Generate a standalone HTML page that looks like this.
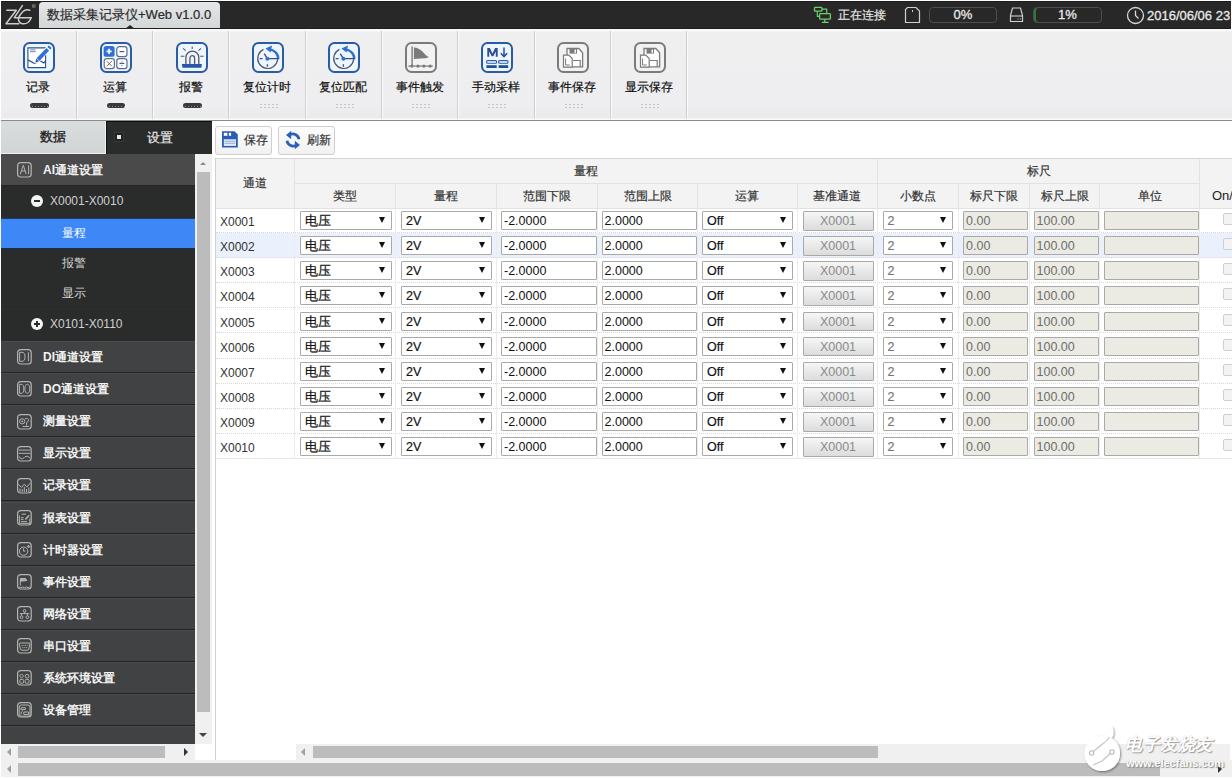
<!DOCTYPE html>
<html><head><meta charset="utf-8"><style>
*{box-sizing:border-box;margin:0;padding:0}
html,body{width:1232px;height:779px;overflow:hidden;background:#fff;font-family:"Liberation Sans",sans-serif;font-size:12px;color:#333}
.tbtn .lbl,.th,.btn span,#stab1,#stab2 span,.sel,#tab{-webkit-text-stroke:0.2px currentColor}
#stab1{-webkit-text-stroke:0.35px currentColor}
.a{position:absolute}
#hdr{left:1px;top:1px;width:1230px;height:28px;background:#282828;border-top:1px solid #1c1c1c;border-bottom:1px solid #1e1e1e}
#tab{left:39px;top:2px;width:181px;height:26px;background:linear-gradient(#e4e6e7,#d4d7d8);border-radius:4px 4px 0 0;color:#2a2a2a;font-size:13px;line-height:26px;padding-left:8px;white-space:nowrap}
#tb{left:1px;top:29px;width:1231px;height:92px;background:linear-gradient(#f9f9f9,#f9f9f9 2px,#efeff0 3px,#eeeef0 85%,#e9eaea);border-bottom:1.5px solid #8a8c8c;box-shadow:inset 0 -1.5px 0 #fbfbfb}
.tbtn{top:2px;width:76.3px;height:88px;border-right:1px solid #cfcfcf;box-shadow:1px 0 0 #fafafa}
.tbtn .lbl{position:absolute;left:0;width:100%;top:48.3px;text-align:center;font-size:12px;color:#111;line-height:16px;white-space:nowrap}
.tbtn svg{position:absolute;left:22.7px;top:11px}
.pill{position:absolute;top:72px;left:29.8px;width:18.8px;height:5.2px;border-radius:3px;background:radial-gradient(circle,#8a8a8a 0.6px,transparent 0.9px) 1px 0.5px/3px 4.5px,#3a3a3a}
.dots{position:absolute;top:72px;left:29px;width:20px;height:6px;background:radial-gradient(circle,#c4c4c4 0.65px,transparent 1px) 0 0/4px 3px}
#stab1{left:1px;top:121px;width:104px;height:33px;background:linear-gradient(#dadddd,#d1d5d6);text-align:center;line-height:31px;font-size:13px;color:#222;border-bottom:1px solid #eef0f0}
#stab2{left:106px;top:120.5px;width:106px;height:33.5px;background:#2a2b2b;color:#e8e8e8;font-size:13px;line-height:31px;border-top:1px solid #0c0c0c;border-left:1px solid #111}
#menu{left:1px;top:154px;width:194px;height:590px;background:#3d3d3d;overflow:hidden}
.mi{position:absolute;left:0;width:194px;height:32.1px;background:#414243;border-bottom:1px solid #242424;box-shadow:inset 0 1px 0 #4b4c4c;color:#f2f2f2;font-size:12px;font-weight:bold;line-height:31px}
.mi .t{position:absolute;left:42px;top:1px}
.mi svg{position:absolute;left:16.4px;top:8.4px}
.sg{position:absolute;left:0;width:194px;background:#2a2b2b;color:#d8d8d8;font-size:13px}
#vs{left:195px;top:154px;width:17px;height:590px;background:#f0f0f0}
#hs{left:1px;top:744px;width:194px;height:16px;background:#f0f0f0}
#content{left:212px;top:121px;width:1020px;height:639px;background:#fff}
.btn{position:absolute;top:126px;height:28.5px;border:1px solid #cfcfcf;border-radius:3px;background:linear-gradient(#fdfdfd,#f1f1f1);font-size:12px;line-height:26px}
.th{position:absolute;background:#f3f3f3;border-right:1px solid #e2e2e2;border-bottom:1px solid #e2e2e2;text-align:center;font-size:12px;color:#333}
.cell{position:absolute;border-right:1px dotted #d8d8d8;border-bottom:1px dotted #cfcfcf}
.sel,.inp,.dis,.xb{position:absolute;height:19px;border:1px solid #a9a9a9;border-radius:1px;background:#fff;font-size:12.5px;color:#111;line-height:18px;padding-left:4px;white-space:nowrap}
.inp,.dis{padding-left:2px;font-size:12.5px;line-height:18.5px}
.sel:after{content:"";position:absolute;right:6px;top:5px;border-left:3px solid transparent;border-right:3px solid transparent;border-top:6.5px solid #111}
.dis{background:#ebebe4;color:#6d6d6d}
.xb{background:linear-gradient(#f6f6f6,#dcdcdc);color:#8a8a8a;text-align:center;padding:0;line-height:19px;height:19.5px}
.chk{position:absolute;width:12px;height:12px;border:1px solid #cfcfcf;border-radius:2px;background:#f3f3f3}
</style></head><body>
<div id="hdr" class="a"></div>
<svg class="a" style="left:3px;top:3px" width="34" height="24" viewBox="0 0 34 24">
<path d="M3.3 7.2H13.3L3 20.7H16.3" fill="none" stroke="#cdcdcd" stroke-width="1.5" stroke-linejoin="round"/>
<path d="M19.7 2.2L11.3 14.7H21" fill="none" stroke="#cdcdcd" stroke-width="1.5" stroke-linejoin="round"/>
<path d="M27.3 7.5Q23 5.5 20 8.5Q16.5 12 15.5 15Q15 19 18.5 20.5Q22 21.5 25 19.5Q27 17.5 28.3 14.7H20.7" fill="none" stroke="#cdcdcd" stroke-width="1.5" stroke-linejoin="round"/>
<rect x="29" y="1.3" width="3.5" height="3.4" fill="#6a6a6a"/>
</svg>
<div id="tab" class="a">数据采集记录仪+Web v1.0.0</div>
<div class="a" style="left:124.5px;top:24.5px;border-left:5px solid transparent;border-right:5px solid transparent;border-bottom:4px solid #262626"></div>

<svg class="a" style="left:813px;top:6px" width="19" height="18" viewBox="0 0 19 18">
<rect x="1.5" y="1.4" width="7.4" height="3.8" rx="0.8" fill="none" stroke="#6ccd6c" stroke-width="1.3"/>
<path d="M4.3 5.2V10.4H6.3M8.9 3.1H13.7V7.3" fill="none" stroke="#6ccd6c" stroke-width="1.2"/>
<rect x="6.6" y="7.6" width="10.8" height="5.6" rx="0.8" fill="none" stroke="#6ccd6c" stroke-width="1.3"/>
<path d="M11.8 13.2V16.2M8.9 16.4H15.6" stroke="#6ccd6c" stroke-width="1.3"/>
</svg>
<div class="a" style="left:838px;top:7px;font-size:12px;line-height:16px;color:#e6e6e6;white-space:nowrap;-webkit-text-stroke:0.2px #e6e6e6">正在连接</div>
<svg class="a" style="left:904px;top:6px" width="17" height="18" viewBox="0 0 17 18">
<path d="M3.5 1.5H12L15.5 5V16.5H1.5V3.5Z" fill="none" stroke="#cfcfcf" stroke-width="1.2"/>
<path d="M8.5 4V6" stroke="#cfcfcf" stroke-width="1"/>
</svg>
<div class="a" style="left:929px;top:7px;width:68px;height:16px;border:1px solid #4d4d4d;border-radius:4px;text-align:center;color:#e8e8e8;font-size:13px;line-height:14px;-webkit-text-stroke:0.3px #e8e8e8">0%</div>
<svg class="a" style="left:1008px;top:6px" width="17" height="18" viewBox="0 0 17 18">
<path d="M2.5 9.5L4.5 2H12.5L14.5 9.5V15.5H2.5Z" fill="none" stroke="#cfcfcf" stroke-width="1.2"/>
<path d="M2.5 10H14.5" stroke="#cfcfcf" stroke-width="1.1"/>
<path d="M9.5 13H10.5M11.8 13H12.8" stroke="#cfcfcf" stroke-width="1.2"/>
</svg>
<div class="a" style="left:1033px;top:7px;width:69px;height:16px;border:1px solid #4d4d4d;border-radius:4px;text-align:center;color:#e8e8e8;font-size:13px;line-height:14px;box-shadow:inset 2px 0 0 #2e7d2e;-webkit-text-stroke:0.3px #e8e8e8">1%</div>
<svg class="a" style="left:1126px;top:6px" width="19" height="19" viewBox="0 0 19 19">
<circle cx="9.5" cy="9.5" r="8" fill="none" stroke="#d8d8d8" stroke-width="1.3"/>
<path d="M9.5 4.5V9.5L12.5 12.5" fill="none" stroke="#d8d8d8" stroke-width="1.3"/>
</svg>
<div class="a" style="left:1147px;top:7px;font-size:13px;line-height:17px;color:#e8e8e8;white-space:nowrap;-webkit-text-stroke:0.3px #e8e8e8">2016/06/06 23:</div>

<div id="tb" class="a"><div class="a tbtn" style="left:-0.40px"><svg width="32" height="31" viewBox="0 0 32 31"><rect x="1" y="1" width="30" height="29" rx="5.5" fill="#eef6fd" stroke="#2b5aa6" stroke-width="2"/><path d="M4.9 5.9H22.6V25.6H4.9Z" fill="#fff" stroke="#2c4f8f" stroke-width="1.1"/>
<path d="M7 7.9H12.5M7 9.7H12.5" stroke="#5a78b0" stroke-width="0.9"/>
<path d="M4.9 17.9L11.6 21.5L16.7 18.5L20.8 21L22.6 18.9" fill="none" stroke="#2c4f8f" stroke-width="1.2"/>
<path d="M12.2 16.6L23.6 4.6L27.4 8.2L16 20.2L11.4 21.5Z" fill="#fff"/>
<path d="M13.6 16.3L23.4 6L26.2 8.6L16.4 18.9Z" fill="#2f6fd6"/><path d="M24.4 4.9L25.8 3.4L28.6 6L27.2 7.5Z" fill="#2f6fd6"/><path d="M13.3 16.8L16 19.3L12.4 20.4Z" fill="#2a4f90"/></svg><div class="lbl">记录</div><div class="pill"></div></div>
<div class="a tbtn" style="left:75.90px"><svg width="32" height="31" viewBox="0 0 32 31"><rect x="1" y="1" width="30" height="29" rx="5.5" fill="#eef6fd" stroke="#2b5aa6" stroke-width="2"/><rect x="3.6" y="4" width="11" height="10.8" rx="2.6" fill="#2f6fd6"/>
<path d="M9.1 6.8V12M6.5 9.4H11.7" stroke="#fff" stroke-width="1.7"/>
<rect x="16.8" y="4.6" width="10.2" height="10" rx="2.6" fill="#fff" stroke="#5a6c94" stroke-width="1.2"/>
<path d="M19.5 9.6H24.3" stroke="#4a5a80" stroke-width="1.2"/>
<rect x="4.2" y="16.6" width="10.2" height="10" rx="2.6" fill="#fff" stroke="#6a7088" stroke-width="1.2"/>
<path d="M6.8 19.2L11.8 24.2M11.8 19.2L6.8 24.2" stroke="#6a6a7a" stroke-width="1"/>
<rect x="16.8" y="16.6" width="10.2" height="10" rx="2.6" fill="#fff" stroke="#5a6c94" stroke-width="1.2"/>
<path d="M19.5 21.4H24.3M21.9 18.8V19.6M21.9 23.2V24" stroke="#4a5a80" stroke-width="1.1"/></svg><div class="lbl">运算</div><div class="pill"></div></div>
<div class="a tbtn" style="left:152.20px"><svg width="32" height="31" viewBox="0 0 32 31"><rect x="1" y="1" width="30" height="29" rx="5.5" fill="#eef6fd" stroke="#2b5aa6" stroke-width="2"/><path d="M9.9 22V15.6A6.45 6.45 0 0 1 22.8 15.6V22" fill="none" stroke="#4f586e" stroke-width="1.3"/>
<path d="M13.9 22V16A2.35 2.35 0 0 1 18.6 16V22" fill="none" stroke="#4f586e" stroke-width="1.3"/>
<path d="M16.2 4.5V7M7.1 6.3L9.6 8.6M25 6.3L22.5 8.6M4.6 14.2H8.4M24.1 14.2H27.7" stroke="#5a5a5a" stroke-width="1.1"/>
<path d="M5.9 21.9H25.9L25.4 25.8H6.4Z" fill="#2757a8"/></svg><div class="lbl">报警</div><div class="pill"></div></div>
<div class="a tbtn" style="left:228.50px"><svg width="32" height="31" viewBox="0 0 32 31"><rect x="1" y="1" width="30" height="29" rx="5.5" fill="#eef6fd" stroke="#2b5aa6" stroke-width="2"/><path d="M23.5 10.2A10 10 0 1 1 11.5 7.4" fill="none" stroke="#4d5670" stroke-width="1.2"/>
<path d="M15.5 6.6A10.6 10.6 0 0 1 27.6 16.7H25A8.3 8.3 0 0 0 17.8 8.6Z" fill="#2f6fd6"/>
<path d="M13.4 6.4L20 3.6L18.6 10.4Z" fill="#2f6fd6"/>
<path d="M7.6 16.7H10.6M15.4 22.2V24.8M15.4 16.7H26.8M12.2 11.6L15.4 16.7" stroke="#3c4c84" stroke-width="1.3"/>
<circle cx="15.4" cy="16.7" r="2" fill="#2f6fd6"/></svg><div class="lbl">复位计时</div><div class="dots"></div></div>
<div class="a tbtn" style="left:304.80px"><svg width="32" height="31" viewBox="0 0 32 31"><rect x="1" y="1" width="30" height="29" rx="5.5" fill="#eef6fd" stroke="#2b5aa6" stroke-width="2"/><path d="M23.5 10.2A10 10 0 1 1 11.5 7.4" fill="none" stroke="#4d5670" stroke-width="1.2"/>
<path d="M15.5 6.6A10.6 10.6 0 0 1 27.6 16.7H25A8.3 8.3 0 0 0 17.8 8.6Z" fill="#2f6fd6"/>
<path d="M13.4 6.4L20 3.6L18.6 10.4Z" fill="#2f6fd6"/>
<path d="M7.6 16.7H10.6M15.4 22.2V24.8M15.4 16.7H26.8M12.2 11.6L15.4 16.7" stroke="#3c4c84" stroke-width="1.3"/>
<circle cx="15.4" cy="16.7" r="2" fill="#2f6fd6"/></svg><div class="lbl">复位匹配</div><div class="dots"></div></div>
<div class="a tbtn" style="left:381.10px"><svg width="32" height="31" viewBox="0 0 32 31"><rect x="1" y="1" width="30" height="29" rx="5.5" fill="#f2f2f2" stroke="#7b7b7b" stroke-width="2"/><path d="M7.1 4.4V23.5" stroke="#7b7b7b" stroke-width="1.4"/>
<path d="M8.9 5.4Q14 5.6 17.5 9.5Q20.5 13.5 23.8 15.2Q21 16.6 16 16.6Q12 16.6 8.9 16.9Z" fill="#7b7b7b"/>
<path d="M3.3 24.1H27.9" stroke="#7b7b7b" stroke-width="1.2"/>
<circle cx="6.9" cy="24.1" r="1.6" fill="#7b7b7b"/><circle cx="13" cy="24.1" r="1.6" fill="#7b7b7b"/><circle cx="18.9" cy="24.1" r="1.6" fill="#7b7b7b"/><circle cx="25.1" cy="24.1" r="1.6" fill="#7b7b7b"/></svg><div class="lbl">事件触发</div><div class="dots"></div></div>
<div class="a tbtn" style="left:457.40px"><svg width="32" height="31" viewBox="0 0 32 31"><rect x="1" y="1" width="30" height="29" rx="5.5" fill="#eef6fd" stroke="#2b5aa6" stroke-width="2"/><path d="M6.3 14.8V5.9H8.9L11.5 11.4L14.1 5.9H16.7V14.8H14.8V9.4L12.3 14.2H10.7L8.2 9.4V14.8Z" fill="#2a4f9a"/>
<path d="M23 5.5V14M19.8 11.2L23 14.6L26.2 11.2" fill="none" stroke="#2a4f9a" stroke-width="1.5"/>
<rect x="5.6" y="18.6" width="10" height="2.6" rx="1" fill="#fff" stroke="#2a5aa8" stroke-width="1.1"/>
<rect x="17.6" y="18.6" width="9.4" height="2.6" rx="1" fill="#fff" stroke="#2a5aa8" stroke-width="1.1"/>
<rect x="5.4" y="23.2" width="10.3" height="2.8" fill="#234f95"/><rect x="17.6" y="23.2" width="9.6" height="2.8" fill="#234f95"/></svg><div class="lbl">手动采样</div><div class="dots"></div></div>
<div class="a tbtn" style="left:533.70px"><svg width="32" height="31" viewBox="0 0 32 31"><rect x="1" y="1" width="30" height="29" rx="5.5" fill="#f2f2f2" stroke="#7b7b7b" stroke-width="2"/><path d="M10 6.5H21.8L25.6 10.8V24.8H10Z" fill="#fff" stroke="#7b7b7b" stroke-width="1.3"/>
<rect x="12.5" y="7" width="7.5" height="4.6" fill="#7b7b7b"/><rect x="17.5" y="7.6" width="1.5" height="3.2" fill="#fff"/>
<path d="M16 18.5H23.2V24.8" fill="none" stroke="#7b7b7b" stroke-width="1.2"/>
<path d="M6.5 13.2H11.8L15.2 16.6V25.2H6.5Z" fill="#fff" stroke="#7b7b7b" stroke-width="1.2"/>
<path d="M8.6 16.5V23H12.8" fill="none" stroke="#7b7b7b" stroke-width="1"/></svg><div class="lbl">事件保存</div><div class="dots"></div></div>
<div class="a tbtn" style="left:610.00px"><svg width="32" height="31" viewBox="0 0 32 31"><rect x="1" y="1" width="30" height="29" rx="5.5" fill="#f2f2f2" stroke="#7b7b7b" stroke-width="2"/><path d="M10 6.5H21.8L25.6 10.8V24.8H10Z" fill="#fff" stroke="#7b7b7b" stroke-width="1.3"/>
<rect x="12.5" y="7" width="7.5" height="4.6" fill="#7b7b7b"/><rect x="17.5" y="7.6" width="1.5" height="3.2" fill="#fff"/>
<path d="M16 18.5H23.2V24.8" fill="none" stroke="#7b7b7b" stroke-width="1.2"/>
<path d="M6.5 13.2H11.8L15.2 16.6V25.2H6.5Z" fill="#fff" stroke="#7b7b7b" stroke-width="1.2"/>
<path d="M8.6 16.5V23H12.8" fill="none" stroke="#7b7b7b" stroke-width="1"/></svg><div class="lbl">显示保存</div><div class="dots"></div></div></div>
<div id="stab1" class="a">数据</div><div class="a" style="left:105px;top:121px;width:1px;height:33px;background:#f0f2f2"></div>
<div id="stab2" class="a"><span class="a" style="left:10px;top:13.5px;width:4px;height:4px;background:#e8e8e8;box-shadow:0 0 0 2px #222,0 0 0 3px #383838"></span><span class="a" style="left:40px;top:0">设置</span></div>
<div id="menu" class="a">
<div class="mi" style="top:0;background:#4a4a4a;box-shadow:none"><svg width="16" height="17" viewBox="0 0 16 17"><rect x="0.6" y="0.6" width="13.6" height="14.4" rx="3" fill="none" stroke="#b4b4b4" stroke-width="1.2"/><g fill="none" stroke="#b4b4b4" stroke-width="1"><path d="M3.3 12.2L6.3 3.3L9.2 12.2M4.4 9H8.3M11.6 3.3V12.2"/></g></svg><span class="t" style="top:1px">AI通道设置</span></div>
<div class="sg" style="top:32px;height:155px"></div>
<div class="a" style="left:30px;top:41px;width:12px;height:12px;border-radius:50%;background:#f4f4f4"></div><div class="a" style="left:33px;top:46px;width:6px;height:2px;background:#2a2b2b"></div>
<div class="a" style="left:49px;top:39px;color:#d0d0d0;font-size:12px;line-height:16px;white-space:nowrap">X0001-X0010</div>
<div class="a" style="left:0;top:64px;width:194px;height:31px;background:#3d87f6;border-top:1px solid #1e3a66;border-bottom:1px solid #1a2c4c"></div>
<div class="a" style="left:61px;top:71px;color:#fff;font-size:12px;line-height:16px">量程</div>
<div class="a" style="left:61px;top:101px;color:#d0d0d0;font-size:12px;line-height:16px">报警</div>
<div class="a" style="left:61px;top:131px;color:#d0d0d0;font-size:12px;line-height:16px">显示</div>
<div class="a" style="left:0;top:155px;width:194px;height:1px;background:#2e2e2e"></div>
<div class="a" style="left:30px;top:164px;width:12px;height:12px;border-radius:50%;background:#f4f4f4"></div><div class="a" style="left:33px;top:169px;width:6px;height:2px;background:#2a2b2b"></div><div class="a" style="left:35px;top:167px;width:2px;height:6px;background:#2a2b2b"></div>
<div class="a" style="left:49px;top:162px;color:#d0d0d0;font-size:12px;line-height:16px;white-space:nowrap">X0101-X0110</div>
<div class="mi" style="top:187.0px"><svg width="16" height="17" viewBox="0 0 16 17"><rect x="0.6" y="0.6" width="13.6" height="14.4" rx="3" fill="none" stroke="#b4b4b4" stroke-width="1.2"/><g fill="none" stroke="#b4b4b4" stroke-width="1"><path d="M2.6 3.3H5Q8 3.3 8 7.8Q8 12.3 5 12.3H2.6ZM11.4 3.3V12.3"/></g></svg><span class="t">DI通道设置</span></div>
<div class="mi" style="top:219.1px"><svg width="16" height="17" viewBox="0 0 16 17"><rect x="0.6" y="0.6" width="13.6" height="14.4" rx="3" fill="none" stroke="#b4b4b4" stroke-width="1.2"/><g fill="none" stroke="#b4b4b4" stroke-width="1"><path d="M2.4 3.3H4.2Q6.8 3.3 6.8 7.8Q6.8 12.3 4.2 12.3H2.4Z"/><ellipse cx="10.3" cy="7.8" rx="2.4" ry="4.5"/></g></svg><span class="t">DO通道设置</span></div>
<div class="mi" style="top:251.2px"><svg width="16" height="17" viewBox="0 0 16 17"><rect x="0.6" y="0.6" width="13.6" height="14.4" rx="3" fill="none" stroke="#b4b4b4" stroke-width="1.2"/><g fill="none" stroke="#b4b4b4" stroke-width="1"><circle cx="5.2" cy="7.3" r="2.6"/><circle cx="5.2" cy="7.3" r="0.6" fill="#b4b4b4"/><path d="M7.9 4.8Q11.8 4 11.6 6.3Q11.3 8 9.6 8.6V11.5M5.5 12.5H12"/></g></svg><span class="t">测量设置</span></div>
<div class="mi" style="top:283.3px"><svg width="16" height="17" viewBox="0 0 16 17"><rect x="0.6" y="0.6" width="13.6" height="14.4" rx="3" fill="none" stroke="#b4b4b4" stroke-width="1.2"/><g fill="none" stroke="#b4b4b4" stroke-width="1"><path d="M1.8 4.1H13.2M1.8 7.3H13.2M2.1 10.4Q3.5 13.6 5.5 12.8Q7 12 8 10.7Q10 9.3 12.8 11.6"/></g></svg><span class="t">显示设置</span></div>
<div class="mi" style="top:315.4px"><svg width="16" height="17" viewBox="0 0 16 17"><rect x="0.6" y="0.6" width="13.6" height="14.4" rx="3" fill="none" stroke="#b4b4b4" stroke-width="1.2"/><g fill="none" stroke="#b4b4b4" stroke-width="1"><path d="M1.4 6.4L4.5 9.4L7.3 6.1L9.8 9.1L13.2 5.1M3 10.5V14M5.2 11V14M7.3 9V14M9.5 11V14M11.8 9.5V14"/></g></svg><span class="t">记录设置</span></div>
<div class="mi" style="top:347.5px"><svg width="16" height="17" viewBox="0 0 16 17"><rect x="0.6" y="0.6" width="13.6" height="14.4" rx="3" fill="none" stroke="#b4b4b4" stroke-width="1.2"/><g fill="none" stroke="#b4b4b4" stroke-width="1"><path d="M2.4 5.6V13.4H12.8V8.5M4.5 4.2H9M4 7.6H6.5M4 9.4H6.5M4 11.6H10"/><path d="M8.4 9.5L12.2 5.2" stroke-width="1.6"/></g></svg><span class="t">报表设置</span></div>
<div class="mi" style="top:379.6px"><svg width="16" height="17" viewBox="0 0 16 17"><rect x="0.6" y="0.6" width="13.6" height="14.4" rx="3" fill="none" stroke="#b4b4b4" stroke-width="1.2"/><g fill="none" stroke="#b4b4b4" stroke-width="1"><circle cx="6.6" cy="9.2" r="4.2"/><path d="M6.6 6.3V9.2H8.4"/><path d="M10.3 4.4L11.5 3.3L12.8 4.6L11.6 5.8Z" fill="#b4b4b4"/></g></svg><span class="t">计时器设置</span></div>
<div class="mi" style="top:411.7px"><svg width="16" height="17" viewBox="0 0 16 17"><rect x="0.6" y="0.6" width="13.6" height="14.4" rx="3" fill="none" stroke="#b4b4b4" stroke-width="1.2"/><g fill="none" stroke="#b4b4b4" stroke-width="1"><path d="M3.3 4.4V11.5"/><path d="M3.6 4.6H8.6L9.8 6.6L3.6 7.2Z" fill="#b4b4b4"/><path d="M2 12.8L3.8 13.8L5.6 12.8L7.4 13.8L9.2 12.8L11 13.8L12.8 12.8"/></g></svg><span class="t">事件设置</span></div>
<div class="mi" style="top:443.8px"><svg width="16" height="17" viewBox="0 0 16 17"><rect x="0.6" y="0.6" width="13.6" height="14.4" rx="3" fill="none" stroke="#b4b4b4" stroke-width="1.2"/><g fill="none" stroke="#b4b4b4" stroke-width="1"><circle cx="7.6" cy="4.8" r="1.3"/><path d="M7.6 6.1V7.6M2.8 7.6H12.4M4.5 7.6V9.8M10.4 7.6V9.8"/><circle cx="4.5" cy="11.2" r="1.4"/><circle cx="10.4" cy="11.2" r="1.4"/></g></svg><span class="t">网络设置</span></div>
<div class="mi" style="top:475.9px"><svg width="16" height="17" viewBox="0 0 16 17"><rect x="0.6" y="0.6" width="13.6" height="14.4" rx="3" fill="none" stroke="#b4b4b4" stroke-width="1.2"/><g fill="none" stroke="#b4b4b4" stroke-width="1"><path d="M3.2 5H12Q13.2 5 12.8 6.2L11.8 11Q11.5 12.2 10.3 12.2H4.9Q3.7 12.2 3.4 11L2.4 6.2Q2.1 5 3.2 5Z"/><path d="M4.6 7.4H10.8M5.4 9.6H10" stroke-dasharray="1 0.8"/></g></svg><span class="t">串口设置</span></div>
<div class="mi" style="top:508.0px"><svg width="16" height="17" viewBox="0 0 16 17"><rect x="0.6" y="0.6" width="13.6" height="14.4" rx="3" fill="none" stroke="#b4b4b4" stroke-width="1.2"/><g fill="none" stroke="#b4b4b4" stroke-width="1"><path d="M4.5 3.9L6.6 6L4.5 8.1L2.4 6Z"/><circle cx="10.1" cy="6.2" r="1.9"/><rect x="2.8" y="9.4" width="3.8" height="3.8" rx="1"/><rect x="8.2" y="9.4" width="3.8" height="3.8" rx="1"/></g></svg><span class="t">系统环境设置</span></div>
<div class="mi" style="top:540.1px"><svg width="16" height="17" viewBox="0 0 16 17"><rect x="0.6" y="0.6" width="13.6" height="14.4" rx="3" fill="none" stroke="#b4b4b4" stroke-width="1.2"/><g fill="none" stroke="#b4b4b4" stroke-width="1"><rect x="2.2" y="3" width="10.8" height="11.2" rx="2"/><path d="M4 5.7H8.4V7.6H4ZM6 8.5Q3.8 9.5 4 12.5M6.8 10H11.6V12.5H6.8Z"/></g></svg><span class="t">设备管理</span></div>
<div class="mi" style="top:572.2px"></div>
</div>
<div id="content" class="a"></div>
<div class="btn" style="left:215px;width:57px"><svg class="a" style="left:6px;top:4px" width="16" height="17" viewBox="0 0 16 17"><path d="M0 0.2H12.5L15.8 3.4V16.5H0Z" fill="#2a5cb6"/><rect x="1.8" y="1.8" width="3.6" height="3" fill="#fff"/><rect x="6.9" y="1.8" width="2.2" height="3" fill="#fff"/><rect x="1.8" y="8.3" width="12.2" height="6.6" fill="#e4ecf8"/><path d="M2.5 10.3H13.3M2.5 12.3H13.3" stroke="#7f9fd2" stroke-width="0.8"/></svg><span class="a" style="left:28px;top:0">保存</span></div>
<div class="btn" style="left:278px;width:57px"><svg class="a" style="left:6px;top:4px" width="16" height="18" viewBox="0 0 16 18"><path d="M14 8.2A6.2 6.2 0 0 0 5.2 3.6" fill="none" stroke="#2a5fb8" stroke-width="2.8"/><path d="M1 4L6.2 -0.2V8.2Z" fill="#2a5fb8"/><path d="M2 9.8A6.2 6.2 0 0 0 10.8 14.4" fill="none" stroke="#2a5fb8" stroke-width="2.8"/><path d="M15 14L9.8 18.2V9.8Z" fill="#2a5fb8"/></svg><span class="a" style="left:28px;top:0">刷新</span></div>
<div class="a" style="left:215px;top:158px;width:1017px;height:1px;background:#d6d6d6"></div>
<div class="th" style="left:216px;top:159px;width:79px;height:50px;line-height:48px">通道</div>
<div class="th" style="left:295px;top:159px;width:583px;height:25px;line-height:24px">量程</div>
<div class="th" style="left:878px;top:159px;width:322px;height:25px;line-height:24px">标尺</div>
<div class="th" style="left:1200px;top:159px;width:40px;height:50px;border-bottom:1px solid #e2e2e2"></div>
<div class="th" style="left:295px;top:183px;width:100.5px;height:26px;line-height:24px;border-top:1px solid #e2e2e2">类型</div>
<div class="th" style="left:395.5px;top:183px;width:101.5px;height:26px;line-height:24px;border-top:1px solid #e2e2e2">量程</div>
<div class="th" style="left:497px;top:183px;width:101px;height:26px;line-height:24px;border-top:1px solid #e2e2e2">范围下限</div>
<div class="th" style="left:598px;top:183px;width:100px;height:26px;line-height:24px;border-top:1px solid #e2e2e2">范围上限</div>
<div class="th" style="left:698px;top:183px;width:99.5px;height:26px;line-height:24px;border-top:1px solid #e2e2e2">运算</div>
<div class="th" style="left:797.5px;top:183px;width:80.5px;height:26px;line-height:24px;border-top:1px solid #e2e2e2">基准通道</div>
<div class="th" style="left:878px;top:183px;width:80.5px;height:26px;line-height:24px;border-top:1px solid #e2e2e2">小数点</div>
<div class="th" style="left:958.5px;top:183px;width:71.5px;height:26px;line-height:24px;border-top:1px solid #e2e2e2">标尺下限</div>
<div class="th" style="left:1030px;top:183px;width:70px;height:26px;line-height:24px;border-top:1px solid #e2e2e2">标尺上限</div>
<div class="th" style="left:1100px;top:183px;width:100px;height:26px;line-height:24px;border-top:1px solid #e2e2e2">单位</div>
<div class="a" style="left:1212px;top:188px;font-size:13px;line-height:16px;color:#222">On/Off</div>
<div class="a" style="left:216px;top:207.8px;width:1016px;height:25.13px;background:#fff;border-bottom:1px dotted #d8d8d8"></div>
<div class="a" style="left:294px;top:207.8px;width:1px;height:25.13px;background:#ececec"></div>
<div class="a" style="left:394.5px;top:207.8px;width:1px;height:25.13px;background:#ececec"></div>
<div class="a" style="left:496px;top:207.8px;width:1px;height:25.13px;background:#ececec"></div>
<div class="a" style="left:597px;top:207.8px;width:1px;height:25.13px;background:#ececec"></div>
<div class="a" style="left:697px;top:207.8px;width:1px;height:25.13px;background:#ececec"></div>
<div class="a" style="left:796.5px;top:207.8px;width:1px;height:25.13px;background:#ececec"></div>
<div class="a" style="left:877px;top:207.8px;width:1px;height:25.13px;background:#ececec"></div>
<div class="a" style="left:957.5px;top:207.8px;width:1px;height:25.13px;background:#ececec"></div>
<div class="a" style="left:1029px;top:207.8px;width:1px;height:25.13px;background:#ececec"></div>
<div class="a" style="left:1099px;top:207.8px;width:1px;height:25.13px;background:#ececec"></div>
<div class="a" style="left:1199px;top:207.8px;width:1px;height:25.13px;background:#ececec"></div>
<div class="a" style="left:220px;top:214.00px;font-size:12px;line-height:16px;color:#333">X0001</div>
<div class="sel" style="left:300px;top:211.1px;width:92px">电压</div>
<div class="sel" style="left:401px;top:211.1px;width:90.5px">2V</div>
<div class="inp" style="left:501px;top:211.1px;width:95.5px">-2.0000</div>
<div class="inp" style="left:601.5px;top:211.1px;width:95px">2.0000</div>
<div class="sel" style="left:702px;top:211.1px;width:90.5px">Off</div>
<div class="xb" style="left:802.5px;top:211.1px;width:71px">X0001</div>
<div class="sel" style="left:882.5px;top:211.1px;width:70.5px;color:#777">2</div>
<div class="dis" style="left:963px;top:211.1px;width:65px">0.00</div>
<div class="dis" style="left:1033.5px;top:211.1px;width:65px">100.00</div>
<div class="dis" style="left:1103.5px;top:211.1px;width:95px"></div>
<div class="chk" style="left:1223px;top:213.00px"></div>
<div class="a" style="left:216px;top:232.93px;width:1016px;height:25.13px;background:#eaf1fc;border-bottom:1px dotted #d8d8d8"></div>
<div class="a" style="left:294px;top:232.93px;width:1px;height:25.13px;background:#ececec"></div>
<div class="a" style="left:394.5px;top:232.93px;width:1px;height:25.13px;background:#ececec"></div>
<div class="a" style="left:496px;top:232.93px;width:1px;height:25.13px;background:#ececec"></div>
<div class="a" style="left:597px;top:232.93px;width:1px;height:25.13px;background:#ececec"></div>
<div class="a" style="left:697px;top:232.93px;width:1px;height:25.13px;background:#ececec"></div>
<div class="a" style="left:796.5px;top:232.93px;width:1px;height:25.13px;background:#ececec"></div>
<div class="a" style="left:877px;top:232.93px;width:1px;height:25.13px;background:#ececec"></div>
<div class="a" style="left:957.5px;top:232.93px;width:1px;height:25.13px;background:#ececec"></div>
<div class="a" style="left:1029px;top:232.93px;width:1px;height:25.13px;background:#ececec"></div>
<div class="a" style="left:1099px;top:232.93px;width:1px;height:25.13px;background:#ececec"></div>
<div class="a" style="left:1199px;top:232.93px;width:1px;height:25.13px;background:#ececec"></div>
<div class="a" style="left:220px;top:239.13px;font-size:12px;line-height:16px;color:#333">X0002</div>
<div class="sel" style="left:300px;top:236.23px;width:92px">电压</div>
<div class="sel" style="left:401px;top:236.23px;width:90.5px">2V</div>
<div class="inp" style="left:501px;top:236.23px;width:95.5px">-2.0000</div>
<div class="inp" style="left:601.5px;top:236.23px;width:95px">2.0000</div>
<div class="sel" style="left:702px;top:236.23px;width:90.5px">Off</div>
<div class="xb" style="left:802.5px;top:236.23px;width:71px">X0001</div>
<div class="sel" style="left:882.5px;top:236.23px;width:70.5px;color:#777">2</div>
<div class="dis" style="left:963px;top:236.23px;width:65px">0.00</div>
<div class="dis" style="left:1033.5px;top:236.23px;width:65px">100.00</div>
<div class="dis" style="left:1103.5px;top:236.23px;width:95px"></div>
<div class="chk" style="left:1223px;top:238.13px"></div>
<div class="a" style="left:216px;top:258.06px;width:1016px;height:25.13px;background:#fff;border-bottom:1px dotted #d8d8d8"></div>
<div class="a" style="left:294px;top:258.06px;width:1px;height:25.13px;background:#ececec"></div>
<div class="a" style="left:394.5px;top:258.06px;width:1px;height:25.13px;background:#ececec"></div>
<div class="a" style="left:496px;top:258.06px;width:1px;height:25.13px;background:#ececec"></div>
<div class="a" style="left:597px;top:258.06px;width:1px;height:25.13px;background:#ececec"></div>
<div class="a" style="left:697px;top:258.06px;width:1px;height:25.13px;background:#ececec"></div>
<div class="a" style="left:796.5px;top:258.06px;width:1px;height:25.13px;background:#ececec"></div>
<div class="a" style="left:877px;top:258.06px;width:1px;height:25.13px;background:#ececec"></div>
<div class="a" style="left:957.5px;top:258.06px;width:1px;height:25.13px;background:#ececec"></div>
<div class="a" style="left:1029px;top:258.06px;width:1px;height:25.13px;background:#ececec"></div>
<div class="a" style="left:1099px;top:258.06px;width:1px;height:25.13px;background:#ececec"></div>
<div class="a" style="left:1199px;top:258.06px;width:1px;height:25.13px;background:#ececec"></div>
<div class="a" style="left:220px;top:264.26px;font-size:12px;line-height:16px;color:#333">X0003</div>
<div class="sel" style="left:300px;top:261.36px;width:92px">电压</div>
<div class="sel" style="left:401px;top:261.36px;width:90.5px">2V</div>
<div class="inp" style="left:501px;top:261.36px;width:95.5px">-2.0000</div>
<div class="inp" style="left:601.5px;top:261.36px;width:95px">2.0000</div>
<div class="sel" style="left:702px;top:261.36px;width:90.5px">Off</div>
<div class="xb" style="left:802.5px;top:261.36px;width:71px">X0001</div>
<div class="sel" style="left:882.5px;top:261.36px;width:70.5px;color:#777">2</div>
<div class="dis" style="left:963px;top:261.36px;width:65px">0.00</div>
<div class="dis" style="left:1033.5px;top:261.36px;width:65px">100.00</div>
<div class="dis" style="left:1103.5px;top:261.36px;width:95px"></div>
<div class="chk" style="left:1223px;top:263.26px"></div>
<div class="a" style="left:216px;top:283.19px;width:1016px;height:25.13px;background:#fff;border-bottom:1px dotted #d8d8d8"></div>
<div class="a" style="left:294px;top:283.19px;width:1px;height:25.13px;background:#ececec"></div>
<div class="a" style="left:394.5px;top:283.19px;width:1px;height:25.13px;background:#ececec"></div>
<div class="a" style="left:496px;top:283.19px;width:1px;height:25.13px;background:#ececec"></div>
<div class="a" style="left:597px;top:283.19px;width:1px;height:25.13px;background:#ececec"></div>
<div class="a" style="left:697px;top:283.19px;width:1px;height:25.13px;background:#ececec"></div>
<div class="a" style="left:796.5px;top:283.19px;width:1px;height:25.13px;background:#ececec"></div>
<div class="a" style="left:877px;top:283.19px;width:1px;height:25.13px;background:#ececec"></div>
<div class="a" style="left:957.5px;top:283.19px;width:1px;height:25.13px;background:#ececec"></div>
<div class="a" style="left:1029px;top:283.19px;width:1px;height:25.13px;background:#ececec"></div>
<div class="a" style="left:1099px;top:283.19px;width:1px;height:25.13px;background:#ececec"></div>
<div class="a" style="left:1199px;top:283.19px;width:1px;height:25.13px;background:#ececec"></div>
<div class="a" style="left:220px;top:289.39px;font-size:12px;line-height:16px;color:#333">X0004</div>
<div class="sel" style="left:300px;top:286.49px;width:92px">电压</div>
<div class="sel" style="left:401px;top:286.49px;width:90.5px">2V</div>
<div class="inp" style="left:501px;top:286.49px;width:95.5px">-2.0000</div>
<div class="inp" style="left:601.5px;top:286.49px;width:95px">2.0000</div>
<div class="sel" style="left:702px;top:286.49px;width:90.5px">Off</div>
<div class="xb" style="left:802.5px;top:286.49px;width:71px">X0001</div>
<div class="sel" style="left:882.5px;top:286.49px;width:70.5px;color:#777">2</div>
<div class="dis" style="left:963px;top:286.49px;width:65px">0.00</div>
<div class="dis" style="left:1033.5px;top:286.49px;width:65px">100.00</div>
<div class="dis" style="left:1103.5px;top:286.49px;width:95px"></div>
<div class="chk" style="left:1223px;top:288.39px"></div>
<div class="a" style="left:216px;top:308.32px;width:1016px;height:25.13px;background:#fff;border-bottom:1px dotted #d8d8d8"></div>
<div class="a" style="left:294px;top:308.32px;width:1px;height:25.13px;background:#ececec"></div>
<div class="a" style="left:394.5px;top:308.32px;width:1px;height:25.13px;background:#ececec"></div>
<div class="a" style="left:496px;top:308.32px;width:1px;height:25.13px;background:#ececec"></div>
<div class="a" style="left:597px;top:308.32px;width:1px;height:25.13px;background:#ececec"></div>
<div class="a" style="left:697px;top:308.32px;width:1px;height:25.13px;background:#ececec"></div>
<div class="a" style="left:796.5px;top:308.32px;width:1px;height:25.13px;background:#ececec"></div>
<div class="a" style="left:877px;top:308.32px;width:1px;height:25.13px;background:#ececec"></div>
<div class="a" style="left:957.5px;top:308.32px;width:1px;height:25.13px;background:#ececec"></div>
<div class="a" style="left:1029px;top:308.32px;width:1px;height:25.13px;background:#ececec"></div>
<div class="a" style="left:1099px;top:308.32px;width:1px;height:25.13px;background:#ececec"></div>
<div class="a" style="left:1199px;top:308.32px;width:1px;height:25.13px;background:#ececec"></div>
<div class="a" style="left:220px;top:314.52px;font-size:12px;line-height:16px;color:#333">X0005</div>
<div class="sel" style="left:300px;top:311.62px;width:92px">电压</div>
<div class="sel" style="left:401px;top:311.62px;width:90.5px">2V</div>
<div class="inp" style="left:501px;top:311.62px;width:95.5px">-2.0000</div>
<div class="inp" style="left:601.5px;top:311.62px;width:95px">2.0000</div>
<div class="sel" style="left:702px;top:311.62px;width:90.5px">Off</div>
<div class="xb" style="left:802.5px;top:311.62px;width:71px">X0001</div>
<div class="sel" style="left:882.5px;top:311.62px;width:70.5px;color:#777">2</div>
<div class="dis" style="left:963px;top:311.62px;width:65px">0.00</div>
<div class="dis" style="left:1033.5px;top:311.62px;width:65px">100.00</div>
<div class="dis" style="left:1103.5px;top:311.62px;width:95px"></div>
<div class="chk" style="left:1223px;top:313.52px"></div>
<div class="a" style="left:216px;top:333.45px;width:1016px;height:25.13px;background:#fff;border-bottom:1px dotted #d8d8d8"></div>
<div class="a" style="left:294px;top:333.45px;width:1px;height:25.13px;background:#ececec"></div>
<div class="a" style="left:394.5px;top:333.45px;width:1px;height:25.13px;background:#ececec"></div>
<div class="a" style="left:496px;top:333.45px;width:1px;height:25.13px;background:#ececec"></div>
<div class="a" style="left:597px;top:333.45px;width:1px;height:25.13px;background:#ececec"></div>
<div class="a" style="left:697px;top:333.45px;width:1px;height:25.13px;background:#ececec"></div>
<div class="a" style="left:796.5px;top:333.45px;width:1px;height:25.13px;background:#ececec"></div>
<div class="a" style="left:877px;top:333.45px;width:1px;height:25.13px;background:#ececec"></div>
<div class="a" style="left:957.5px;top:333.45px;width:1px;height:25.13px;background:#ececec"></div>
<div class="a" style="left:1029px;top:333.45px;width:1px;height:25.13px;background:#ececec"></div>
<div class="a" style="left:1099px;top:333.45px;width:1px;height:25.13px;background:#ececec"></div>
<div class="a" style="left:1199px;top:333.45px;width:1px;height:25.13px;background:#ececec"></div>
<div class="a" style="left:220px;top:339.65px;font-size:12px;line-height:16px;color:#333">X0006</div>
<div class="sel" style="left:300px;top:336.75px;width:92px">电压</div>
<div class="sel" style="left:401px;top:336.75px;width:90.5px">2V</div>
<div class="inp" style="left:501px;top:336.75px;width:95.5px">-2.0000</div>
<div class="inp" style="left:601.5px;top:336.75px;width:95px">2.0000</div>
<div class="sel" style="left:702px;top:336.75px;width:90.5px">Off</div>
<div class="xb" style="left:802.5px;top:336.75px;width:71px">X0001</div>
<div class="sel" style="left:882.5px;top:336.75px;width:70.5px;color:#777">2</div>
<div class="dis" style="left:963px;top:336.75px;width:65px">0.00</div>
<div class="dis" style="left:1033.5px;top:336.75px;width:65px">100.00</div>
<div class="dis" style="left:1103.5px;top:336.75px;width:95px"></div>
<div class="chk" style="left:1223px;top:338.65px"></div>
<div class="a" style="left:216px;top:358.58px;width:1016px;height:25.13px;background:#fff;border-bottom:1px dotted #d8d8d8"></div>
<div class="a" style="left:294px;top:358.58px;width:1px;height:25.13px;background:#ececec"></div>
<div class="a" style="left:394.5px;top:358.58px;width:1px;height:25.13px;background:#ececec"></div>
<div class="a" style="left:496px;top:358.58px;width:1px;height:25.13px;background:#ececec"></div>
<div class="a" style="left:597px;top:358.58px;width:1px;height:25.13px;background:#ececec"></div>
<div class="a" style="left:697px;top:358.58px;width:1px;height:25.13px;background:#ececec"></div>
<div class="a" style="left:796.5px;top:358.58px;width:1px;height:25.13px;background:#ececec"></div>
<div class="a" style="left:877px;top:358.58px;width:1px;height:25.13px;background:#ececec"></div>
<div class="a" style="left:957.5px;top:358.58px;width:1px;height:25.13px;background:#ececec"></div>
<div class="a" style="left:1029px;top:358.58px;width:1px;height:25.13px;background:#ececec"></div>
<div class="a" style="left:1099px;top:358.58px;width:1px;height:25.13px;background:#ececec"></div>
<div class="a" style="left:1199px;top:358.58px;width:1px;height:25.13px;background:#ececec"></div>
<div class="a" style="left:220px;top:364.78px;font-size:12px;line-height:16px;color:#333">X0007</div>
<div class="sel" style="left:300px;top:361.88px;width:92px">电压</div>
<div class="sel" style="left:401px;top:361.88px;width:90.5px">2V</div>
<div class="inp" style="left:501px;top:361.88px;width:95.5px">-2.0000</div>
<div class="inp" style="left:601.5px;top:361.88px;width:95px">2.0000</div>
<div class="sel" style="left:702px;top:361.88px;width:90.5px">Off</div>
<div class="xb" style="left:802.5px;top:361.88px;width:71px">X0001</div>
<div class="sel" style="left:882.5px;top:361.88px;width:70.5px;color:#777">2</div>
<div class="dis" style="left:963px;top:361.88px;width:65px">0.00</div>
<div class="dis" style="left:1033.5px;top:361.88px;width:65px">100.00</div>
<div class="dis" style="left:1103.5px;top:361.88px;width:95px"></div>
<div class="chk" style="left:1223px;top:363.78px"></div>
<div class="a" style="left:216px;top:383.71px;width:1016px;height:25.13px;background:#fff;border-bottom:1px dotted #d8d8d8"></div>
<div class="a" style="left:294px;top:383.71px;width:1px;height:25.13px;background:#ececec"></div>
<div class="a" style="left:394.5px;top:383.71px;width:1px;height:25.13px;background:#ececec"></div>
<div class="a" style="left:496px;top:383.71px;width:1px;height:25.13px;background:#ececec"></div>
<div class="a" style="left:597px;top:383.71px;width:1px;height:25.13px;background:#ececec"></div>
<div class="a" style="left:697px;top:383.71px;width:1px;height:25.13px;background:#ececec"></div>
<div class="a" style="left:796.5px;top:383.71px;width:1px;height:25.13px;background:#ececec"></div>
<div class="a" style="left:877px;top:383.71px;width:1px;height:25.13px;background:#ececec"></div>
<div class="a" style="left:957.5px;top:383.71px;width:1px;height:25.13px;background:#ececec"></div>
<div class="a" style="left:1029px;top:383.71px;width:1px;height:25.13px;background:#ececec"></div>
<div class="a" style="left:1099px;top:383.71px;width:1px;height:25.13px;background:#ececec"></div>
<div class="a" style="left:1199px;top:383.71px;width:1px;height:25.13px;background:#ececec"></div>
<div class="a" style="left:220px;top:389.91px;font-size:12px;line-height:16px;color:#333">X0008</div>
<div class="sel" style="left:300px;top:387.01px;width:92px">电压</div>
<div class="sel" style="left:401px;top:387.01px;width:90.5px">2V</div>
<div class="inp" style="left:501px;top:387.01px;width:95.5px">-2.0000</div>
<div class="inp" style="left:601.5px;top:387.01px;width:95px">2.0000</div>
<div class="sel" style="left:702px;top:387.01px;width:90.5px">Off</div>
<div class="xb" style="left:802.5px;top:387.01px;width:71px">X0001</div>
<div class="sel" style="left:882.5px;top:387.01px;width:70.5px;color:#777">2</div>
<div class="dis" style="left:963px;top:387.01px;width:65px">0.00</div>
<div class="dis" style="left:1033.5px;top:387.01px;width:65px">100.00</div>
<div class="dis" style="left:1103.5px;top:387.01px;width:95px"></div>
<div class="chk" style="left:1223px;top:388.91px"></div>
<div class="a" style="left:216px;top:408.84px;width:1016px;height:25.13px;background:#fff;border-bottom:1px dotted #d8d8d8"></div>
<div class="a" style="left:294px;top:408.84px;width:1px;height:25.13px;background:#ececec"></div>
<div class="a" style="left:394.5px;top:408.84px;width:1px;height:25.13px;background:#ececec"></div>
<div class="a" style="left:496px;top:408.84px;width:1px;height:25.13px;background:#ececec"></div>
<div class="a" style="left:597px;top:408.84px;width:1px;height:25.13px;background:#ececec"></div>
<div class="a" style="left:697px;top:408.84px;width:1px;height:25.13px;background:#ececec"></div>
<div class="a" style="left:796.5px;top:408.84px;width:1px;height:25.13px;background:#ececec"></div>
<div class="a" style="left:877px;top:408.84px;width:1px;height:25.13px;background:#ececec"></div>
<div class="a" style="left:957.5px;top:408.84px;width:1px;height:25.13px;background:#ececec"></div>
<div class="a" style="left:1029px;top:408.84px;width:1px;height:25.13px;background:#ececec"></div>
<div class="a" style="left:1099px;top:408.84px;width:1px;height:25.13px;background:#ececec"></div>
<div class="a" style="left:1199px;top:408.84px;width:1px;height:25.13px;background:#ececec"></div>
<div class="a" style="left:220px;top:415.04px;font-size:12px;line-height:16px;color:#333">X0009</div>
<div class="sel" style="left:300px;top:412.14px;width:92px">电压</div>
<div class="sel" style="left:401px;top:412.14px;width:90.5px">2V</div>
<div class="inp" style="left:501px;top:412.14px;width:95.5px">-2.0000</div>
<div class="inp" style="left:601.5px;top:412.14px;width:95px">2.0000</div>
<div class="sel" style="left:702px;top:412.14px;width:90.5px">Off</div>
<div class="xb" style="left:802.5px;top:412.14px;width:71px">X0001</div>
<div class="sel" style="left:882.5px;top:412.14px;width:70.5px;color:#777">2</div>
<div class="dis" style="left:963px;top:412.14px;width:65px">0.00</div>
<div class="dis" style="left:1033.5px;top:412.14px;width:65px">100.00</div>
<div class="dis" style="left:1103.5px;top:412.14px;width:95px"></div>
<div class="chk" style="left:1223px;top:414.04px"></div>
<div class="a" style="left:216px;top:433.97px;width:1016px;height:25.13px;background:#fff;border-bottom:1px solid #e6e6e6"></div>
<div class="a" style="left:294px;top:433.97px;width:1px;height:25.13px;background:#ececec"></div>
<div class="a" style="left:394.5px;top:433.97px;width:1px;height:25.13px;background:#ececec"></div>
<div class="a" style="left:496px;top:433.97px;width:1px;height:25.13px;background:#ececec"></div>
<div class="a" style="left:597px;top:433.97px;width:1px;height:25.13px;background:#ececec"></div>
<div class="a" style="left:697px;top:433.97px;width:1px;height:25.13px;background:#ececec"></div>
<div class="a" style="left:796.5px;top:433.97px;width:1px;height:25.13px;background:#ececec"></div>
<div class="a" style="left:877px;top:433.97px;width:1px;height:25.13px;background:#ececec"></div>
<div class="a" style="left:957.5px;top:433.97px;width:1px;height:25.13px;background:#ececec"></div>
<div class="a" style="left:1029px;top:433.97px;width:1px;height:25.13px;background:#ececec"></div>
<div class="a" style="left:1099px;top:433.97px;width:1px;height:25.13px;background:#ececec"></div>
<div class="a" style="left:1199px;top:433.97px;width:1px;height:25.13px;background:#ececec"></div>
<div class="a" style="left:220px;top:440.17px;font-size:12px;line-height:16px;color:#333">X0010</div>
<div class="sel" style="left:300px;top:437.27px;width:92px">电压</div>
<div class="sel" style="left:401px;top:437.27px;width:90.5px">2V</div>
<div class="inp" style="left:501px;top:437.27px;width:95.5px">-2.0000</div>
<div class="inp" style="left:601.5px;top:437.27px;width:95px">2.0000</div>
<div class="sel" style="left:702px;top:437.27px;width:90.5px">Off</div>
<div class="xb" style="left:802.5px;top:437.27px;width:71px">X0001</div>
<div class="sel" style="left:882.5px;top:437.27px;width:70.5px;color:#777">2</div>
<div class="dis" style="left:963px;top:437.27px;width:65px">0.00</div>
<div class="dis" style="left:1033.5px;top:437.27px;width:65px">100.00</div>
<div class="dis" style="left:1103.5px;top:437.27px;width:95px"></div>
<div class="chk" style="left:1223px;top:439.17px"></div>
<div class="a" style="left:216px;top:208px;width:1016px;height:1px;background:#e2e2e2"></div>

<div id="vs" class="a"></div>
<div class="a" style="left:199.5px;top:162px;border-left:3.5px solid transparent;border-right:3.5px solid transparent;border-bottom:3.5px solid #8a8a8a"></div>
<div class="a" style="left:197px;top:172px;width:13px;height:540px;background:#bcbcbc"></div>
<div class="a" style="left:199px;top:733px;border-left:4px solid transparent;border-right:4px solid transparent;border-top:4px solid #444"></div>
<div id="hs" class="a"></div>
<div class="a" style="left:7px;top:748px;border-top:4px solid transparent;border-bottom:4px solid transparent;border-right:4px solid #a0a0a0"></div>
<div class="a" style="left:18px;top:746px;width:147px;height:12px;background:#bcbcbc"></div>
<div class="a" style="left:184px;top:748px;border-top:4px solid transparent;border-bottom:4px solid transparent;border-left:4px solid #333"></div>
<div class="a" style="left:215px;top:158px;width:1px;height:602px;background:#d0d0d0"></div>
<div class="a" style="left:296px;top:744px;width:934px;height:16px;background:#f0f0f0"></div>
<div class="a" style="left:301px;top:748px;border-top:4px solid transparent;border-bottom:4px solid transparent;border-right:4px solid #a0a0a0"></div>
<div class="a" style="left:313px;top:746px;width:565px;height:12px;background:#bcbcbc"></div>
<div class="a" style="left:1px;top:760px;width:1231px;height:17px;background:#f0f0f0"></div>
<div class="a" style="left:7px;top:765px;border-top:4px solid transparent;border-bottom:4px solid transparent;border-right:4px solid #a0a0a0"></div>
<div class="a" style="left:18px;top:763px;width:1142px;height:13px;background:#bcbcbc"></div>
<div class="a" style="left:1218px;top:765px;border-top:4px solid transparent;border-bottom:4px solid transparent;border-left:4px solid #333"></div>


<svg class="a" style="left:1080px;top:720px" width="46" height="56" viewBox="0 0 46 56">
<defs><filter id="sh" x="-30%" y="-30%" width="160%" height="160%"><feGaussianBlur in="SourceAlpha" stdDeviation="1.2"/><feOffset dx="0.8" dy="1"/><feComponentTransfer><feFuncA type="linear" slope="0.45"/></feComponentTransfer><feMerge><feMergeNode/><feMergeNode in="SourceGraphic"/></feMerge></filter></defs>
<g filter="url(#sh)">
<path d="M22.4 15.5A17.8 17.8 0 1 1 22 15.5Q28 14 30.5 10Q32 7 31 4.5Q34.5 9 33 16Q31.5 19 29.5 17.5Z" fill="#fff"/>
</g>
<path d="M12 32.5L22.5 24Q27 21.5 29.5 17" fill="none" stroke="#c4c4c4" stroke-width="1.2"/>
<path d="M31.5 32.5L22 41L13 45" fill="none" stroke="#c4c4c4" stroke-width="1.2"/>
<circle cx="11.6" cy="33" r="2.2" fill="#fff" stroke="#b8b8b8" stroke-width="1.1"/>
<circle cx="32" cy="32" r="2.2" fill="#fff" stroke="#b8b8b8" stroke-width="1.1"/>
</svg>
<div class="a" style="left:1125px;top:735px;font-size:17px;line-height:20px;font-style:italic;font-weight:bold;color:#fff;text-shadow:1px 1px 1px #9a9a9a,0 0 1px #bbb;white-space:nowrap;letter-spacing:0.5px">电子发烧友</div>
<div class="a" style="left:1126px;top:757px;font-size:11px;line-height:12px;font-weight:bold;color:#fff;text-shadow:1px 1px 1px #8a8a8a,0 0 1px #aaa;white-space:nowrap">www.elecfans.com</div>

</body></html>
